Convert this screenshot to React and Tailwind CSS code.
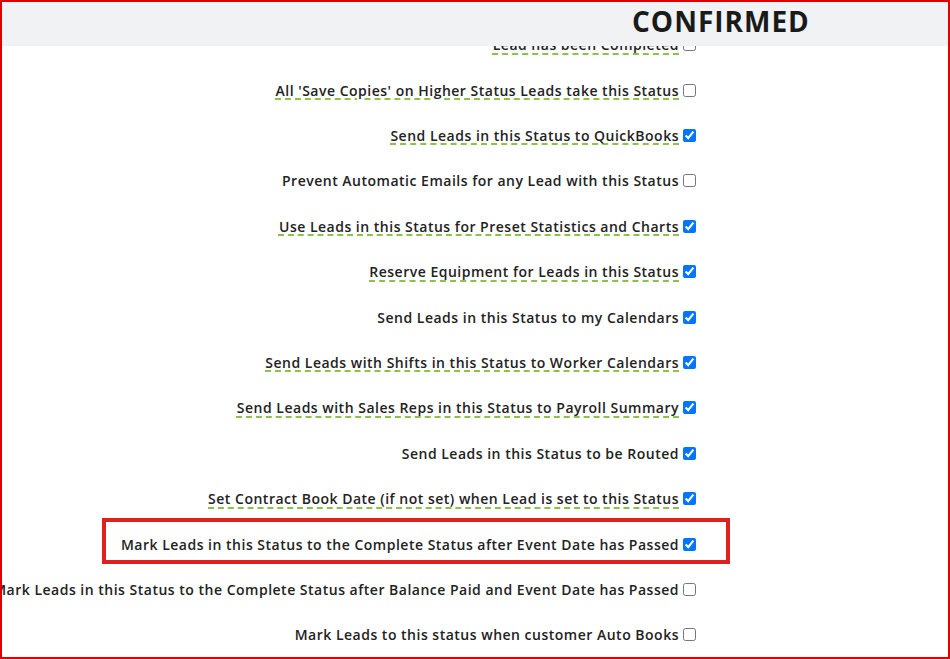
import React from "react";

const rows = [
  { label: "Lead has been Completed", checked: false, spell: true },
  { label: "All 'Save Copies' on Higher Status Leads take this Status", checked: false, spell: true },
  { label: "Send Leads in this Status to QuickBooks", checked: true, spell: true },
  { label: "Prevent Automatic Emails for any Lead with this Status", checked: false },
  { label: "Use Leads in this Status for Preset Statistics and Charts", checked: true, spell: true },
  { label: "Reserve Equipment for Leads in this Status", checked: true, spell: true },
  { label: "Send Leads in this Status to my Calendars", checked: true },
  { label: "Send Leads with Shifts in this Status to Worker Calendars", checked: true, spell: true },
  { label: "Send Leads with Sales Reps in this Status to Payroll Summary", checked: true, spell: true },
  { label: "Send Leads in this Status to be Routed", checked: true },
  { label: "Set Contract Book Date (if not set) when Lead is set to this Status", checked: true, spell: true },
  { label: "Mark Leads in this Status to the Complete Status after Event Date has Passed", checked: true, boxed: true },
  { label: "Mark Leads in this Status to the Complete Status after Balance Paid and Event Date has Passed", checked: false },
  { label: "Mark Leads to this status when customer Auto Books", checked: false },
];

function Option({ label, checked, spell }) {
  return (
    <label className="flex items-center whitespace-nowrap">
      <span
        className={
          spell
            ? "underline decoration-dashed decoration-[#8bc34a] decoration-[1.5px] underline-offset-[3px]"
            : ""
        }
      >
        {label}
      </span>
      <input
        type="checkbox"
        defaultChecked={checked}
        className="ml-[4px] h-[13px] w-[13px] accent-[#0075ff]"
      />
    </label>
  );
}

export default function App() {
  return (
    <div
      className="h-[659px] w-[950px] overflow-hidden border-2 border-[#e00000] bg-white text-[#222]"
      style={{ fontFamily: "'Open Sans', 'Liberation Sans', sans-serif" }}
    >
      <div className="relative z-10 flex h-[44px] items-center bg-[#f1f2f3] pb-[6px] pl-[630px]">
        <h1 className="text-[28px] font-bold leading-none tracking-[1px] text-[#1a1a1a]">
          CONFIRMED
        </h1>
      </div>
      <div className="h-[611px] overflow-hidden">
        <div className="-mt-[24px] flex w-[694px] flex-col text-[14px] font-semibold tracking-[0.5px]">
          {rows.map((r) => (
            <div key={r.label} className="flex h-[45.4px] items-center justify-end">
              {r.boxed ? (
                <div className="-mr-[34px] flex h-[46px] -translate-y-[3px] items-center border-4 border-[#dd2020] pl-[15px] pr-[30px]">
                  <div className="translate-y-[3px]">
                    <Option {...r} />
                  </div>
                </div>
              ) : (
                <Option {...r} />
              )}
            </div>
          ))}
        </div>
      </div>
    </div>
  );
}
